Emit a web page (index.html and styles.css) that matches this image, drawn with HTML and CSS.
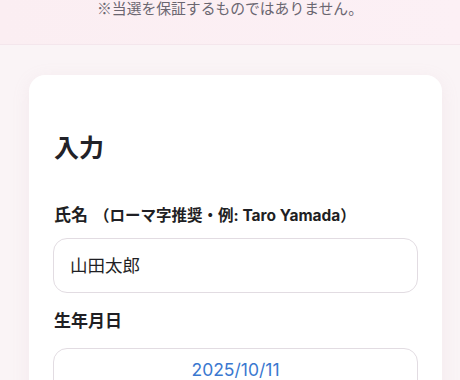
FILE: index.html
```html
<!DOCTYPE html>
<html lang="ja">
<head>
<meta charset="utf-8">
<link rel="stylesheet" href="styles.css">
</head>
<body>
<header class="top">
  <p class="notice">※当選を保証するものではありません。</p>
</header>
<main class="page">
  <section class="card">
    <h2 class="title">入力</h2>
    <div class="field">
      <label class="label">氏名 <span class="hint">（ローマ字推奨・例: Taro Yamada）</span></label>
      <input class="input" type="text" value="山田太郎">
    </div>
    <div class="field">
      <label class="label">生年月日</label>
      <input class="input date" type="text" value="2025/10/11">
    </div>
  </section>
</main>
</body>
</html>
```
FILE: styles.css
```css
* { box-sizing: border-box; }
html, body { margin: 0; padding: 0; }
body {
  background: #faf4f6;
  font-family: Inter, "Noto Sans CJK JP", sans-serif;
  color: #1f1f24;
  width: 460px;
  height: 380px;
  overflow: hidden;
}
.top {
  height: 45px;
  background: linear-gradient(90deg, #fbeef2, #fcf0f5);
  border-bottom: 1px solid #f4e6ec;
  display: flex;
  justify-content: center;
  align-items: flex-start;
}
.notice {
  margin: -4px 0 0;
  font-family: "Noto Sans CJK JP", sans-serif;
  font-size: 14.8px;
  line-height: 24px;
  color: #6a6670;
}
.page {
  padding: 30px 18px 0 29px;
}
.card {
  background: #fff;
  border-radius: 16px;
  padding: 55px 24px 0 24px;
  width: 413px;
  height: 340px;
  box-shadow: 0 4px 18px rgba(200, 160, 175, 0.12);
}
.title {
  margin: 0 0 37px 1px;
  font-size: 25px;
  line-height: 36px;
  font-weight: 700;
  color: #222228;
}
.field { margin-bottom: 16px; }
.label {
  display: block;
  font-size: 17px;
  line-height: 25px;
  font-weight: 700;
  color: #1f1f24;
  margin: 0 0 10px 1px;
}
.hint {
  font-size: 15.5px;
  font-weight: 700;
  margin-left: 2px;
}
.input {
  display: block;
  width: 100%;
  height: 55px;
  border: 1px solid #e2dce2;
  border-radius: 14px;
  padding: 0 16px 2px;
  font-family: inherit;
  font-size: 17.5px;
  color: #1f1f24;
  background: #fff;
  outline: none;
}
.date {
  text-align: center;
  color: #3a78d0;
  margin-top: 14px;
  padding-bottom: 12px;
}
```
